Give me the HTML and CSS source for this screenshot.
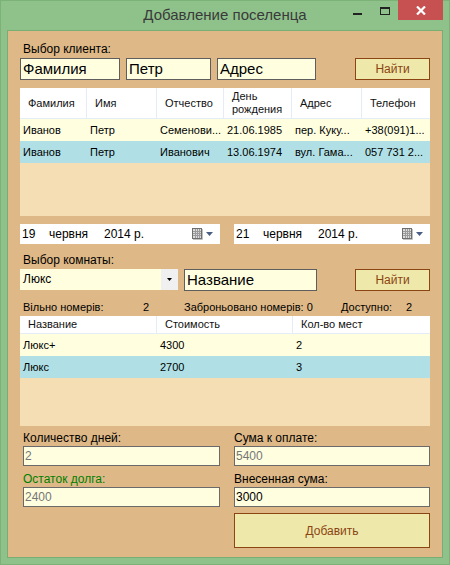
FILE: index.html
```html
<!DOCTYPE html>
<html lang="ru">
<head>
<meta charset="utf-8">
<title>Добавление поселенца</title>
<link rel="stylesheet" href="styles.css">
</head>
<body>
<div class="window">
  <div class="titlebar">
    <div class="spacer"></div>
    <div class="title">Добавление поселенца</div>
    <div class="controls">
      <div class="ctl ctl-min"><span class="min-bar"></span></div>
      <div class="ctl ctl-max"><span class="max-box"></span></div>
      <div class="ctl ctl-close">
        <svg width="10" height="9" viewBox="0 0 10 9"><path d="M1 0.5 L9 8.5 M9 0.5 L1 8.5" stroke="#fff" stroke-width="2.2" fill="none"/></svg>
      </div>
    </div>
  </div>

  <div class="client">
    <div class="lbl lbl-client">Выбор клиента:</div>
    <div class="search-row">
      <div class="tb tb-1">Фамилия</div>
      <div class="tb tb-2">Петр</div>
      <div class="tb tb-3">Адрес</div>
      <div class="btn btn-find">Найти</div>
    </div>

    <div class="dgv dgv-clients">
      <div class="dgv-head cols6">
        <div class="hc">Фамилия</div>
        <div class="hc">Имя</div>
        <div class="hc">Отчество</div>
        <div class="hc two">День<br>рождения</div>
        <div class="hc">Адрес</div>
        <div class="hc">Телефон</div>
      </div>
      <div class="dgv-row cols6 row-yellow">
        <div class="c">Иванов</div>
        <div class="c">Петр</div>
        <div class="c">Семенови...</div>
        <div class="c">21.06.1985</div>
        <div class="c">пер. Куку...</div>
        <div class="c">+38(091)1...</div>
      </div>
      <div class="dgv-row cols6 row-blue">
        <div class="c">Иванов</div>
        <div class="c">Петр</div>
        <div class="c">Иванович</div>
        <div class="c">13.06.1974</div>
        <div class="c">вул. Гама...</div>
        <div class="c">057 731 2...</div>
      </div>
    </div>

    <div class="dates">
      <div class="date date-1">
        <span class="d-day">19</span><span class="d-month">червня</span><span class="d-year">2014 р.</span>
        <span class="d-icon">
          <svg width="11" height="12" viewBox="0 0 11 12"><rect x="0.5" y="0.5" width="9" height="10" fill="#dcdcdc" stroke="#6e6e6e"/><path d="M1 3.5H9M1 5.5H9M1 7.5H9M3.5 1V10M5.5 1V10M7.5 1V10" stroke="#9a9a9a" stroke-width="1"/><path d="M1 11.5H10.5V1" stroke="#c0c0c0" stroke-width="1" fill="none"/></svg>
          <svg class="arr" width="7" height="4" viewBox="0 0 7 4"><path d="M0 0H7L3.5 4Z" fill="#4a5d85"/></svg>
        </span>
      </div>
      <div class="date date-2">
        <span class="d-day">21</span><span class="d-month">червня</span><span class="d-year">2014 р.</span>
        <span class="d-icon">
          <svg width="11" height="12" viewBox="0 0 11 12"><rect x="0.5" y="0.5" width="9" height="10" fill="#dcdcdc" stroke="#6e6e6e"/><path d="M1 3.5H9M1 5.5H9M1 7.5H9M3.5 1V10M5.5 1V10M7.5 1V10" stroke="#9a9a9a" stroke-width="1"/><path d="M1 11.5H10.5V1" stroke="#c0c0c0" stroke-width="1" fill="none"/></svg>
          <svg class="arr" width="7" height="4" viewBox="0 0 7 4"><path d="M0 0H7L3.5 4Z" fill="#4a5d85"/></svg>
        </span>
      </div>
    </div>

    <div class="lbl lbl-room">Выбор комнаты:</div>
    <div class="room-row">
      <div class="combo">
        <span class="combo-text">Люкс</span>
        <span class="combo-btn"><svg width="5" height="3" viewBox="0 0 5 3"><path d="M0 0H5L2.5 3Z" fill="#000"/></svg></span>
      </div>
      <div class="tb tb-name">Название</div>
      <div class="btn btn-find">Найти</div>
    </div>

    <div class="stats">
      <span class="s1">Вільно номерів:</span><span class="s2">2</span><span class="s3">Заброньовано номерів: 0</span><span class="s4">Доступно:</span><span class="s5">2</span>
    </div>

    <div class="dgv dgv-rooms">
      <div class="dgv-head cols3">
        <div class="hc">Название</div>
        <div class="hc">Стоимость</div>
        <div class="hc">Кол-во мест</div>
      </div>
      <div class="dgv-row cols3 row-yellow">
        <div class="c">Люкс+</div>
        <div class="c">4300</div>
        <div class="c">2</div>
      </div>
      <div class="dgv-row cols3 row-blue">
        <div class="c">Люкс</div>
        <div class="c">2700</div>
        <div class="c">3</div>
      </div>
    </div>

    <div class="bottom">
      <div class="col">
        <div class="lbl">Количество дней:</div>
        <div class="field muted">2</div>
        <div class="lbl green">Остаток долга:</div>
        <div class="field muted">2400</div>
      </div>
      <div class="col">
        <div class="lbl">Сума к оплате:</div>
        <div class="field muted">5400</div>
        <div class="lbl">Внесенная сума:</div>
        <div class="field">3000</div>
        <div class="btn btn-add">Добавить</div>
      </div>
    </div>
  </div>
</div>
</body>
</html>
```

FILE: styles.css
```css
html, body {
  margin: 0;
  padding: 0;
}

body {
  width: 450px;
  height: 565px;
  overflow: hidden;
  font-family: "Liberation Sans", Arial, sans-serif;
  color: #000;
}

.window {
  width: 450px;
  height: 565px;
  background: #8fc28b;
  box-shadow: inset 0 0 0 1px #7cb178;
  display: flex;
  flex-direction: column;
}

/* title bar */
.titlebar {
  height: 30px;
  display: grid;
  grid-template-columns: 1fr auto 1fr;
  flex: none;
}

.title {
  font-size: 15px;
  line-height: 30px;
  color: #3a3a3a;
  white-space: nowrap;
}

.controls {
  justify-self: end;
  display: flex;
  margin-right: 7px;
  height: 20px;
}

.ctl {
  width: 27px;
  height: 20px;
  display: flex;
  justify-content: center;
  align-items: flex-start;
}

.min-bar {
  display: block;
  width: 9px;
  height: 2px;
  margin-top: 13px;
  background: #222;
}

.max-box {
  display: block;
  width: 10px;
  height: 8px;
  margin-top: 7px;
  box-sizing: border-box;
  border: 1px solid #222;
  border-top-width: 2px;
}

.ctl-close {
  width: 45px;
  background: #c75050;
  align-items: center;
}

/* client area */
.client {
  flex: 1;
  margin: 0 7px 7px 7px;
  border: 1px solid #78ad74;
  background: #deb887;
  padding: 0 12px;
  display: flex;
  flex-direction: column;
}

.lbl {
  font-size: 12px;
  line-height: 14px;
  height: 14px;
  white-space: nowrap;
}

.lbl-client {
  margin-top: 11px;
  padding-left: 3px;
}

.search-row {
  margin-top: 2px;
  display: flex;
  height: 22px;
}

.tb {
  box-sizing: border-box;
  height: 22px;
  border: 1px solid #5e5e5e;
  background: #ffffe0;
  font-size: 15px;
  line-height: 20px;
  padding-left: 2px;
  white-space: nowrap;
  overflow: hidden;
}

.tb-1 { width: 100px; }
.tb-2 { width: 85px; margin-left: 6px; }
.tb-3 { width: 99px; margin-left: 6px; }
.tb-name { width: 133px; margin-left: 6px; }

.btn {
  box-sizing: border-box;
  border: 1px solid #8b4513;
  background: #eee8aa;
  color: #8b4513;
  font-size: 12px;
  display: flex;
  align-items: center;
  justify-content: center;
}

.btn-find {
  width: 75px;
  height: 22px;
  margin-left: auto;
}

/* data grids */
.dgv {
  background: #f5deb3;
  font-size: 11px;
}

.dgv-clients {
  margin-top: 8px;
  height: 128px;
}

.dgv-rooms {
  margin-top: 2px;
  height: 110px;
}

.cols6 {
  display: grid;
  grid-template-columns: 67px 70px 67px 68px 70px 68px;
}

.cols3 {
  display: grid;
  grid-template-columns: 137px 136px 137px;
}

.dgv-head {
  background: #fff;
  box-sizing: border-box;
  border-bottom: 1px solid #e4ecf7;
}

.dgv-clients .dgv-head { height: 31px; }
.dgv-rooms .dgv-head { height: 18px; }

.hc {
  display: flex;
  align-items: center;
  padding-left: 8px;
  border-right: 1px solid #e4ecf7;
  line-height: 13px;
  white-space: nowrap;
  color: #111;
}

.hc:last-child { border-right: none; }

.dgv-row {
  height: 22px;
  line-height: 22px;
}

.c {
  padding-left: 3px;
  white-space: nowrap;
  overflow: hidden;
}

.row-yellow { background: #ffffe0; }
.row-blue { background: #b0e0e6; }

/* dates */
.dates {
  margin-top: 8px;
  display: flex;
  justify-content: space-between;
  height: 20px;
}

.date {
  height: 20px;
  background: #fff;
  display: flex;
  align-items: center;
  font-size: 12px;
  padding-left: 2px;
  box-sizing: border-box;
  white-space: nowrap;
}

.date-1 { width: 200px; }
.date-2 { width: 196px; }

.d-day { width: 27px; }
.d-month { width: 55px; }

.d-icon {
  margin-left: auto;
  margin-right: 7px;
  display: flex;
  align-items: center;
  gap: 3px;
}

.arr { margin-top: -1px; }

/* room selection */
.lbl-room {
  margin-top: 9px;
  padding-left: 3px;
}

.room-row {
  margin-top: 2px;
  display: flex;
  height: 22px;
}

.combo {
  width: 158px;
  height: 21px;
  background: #ffffe0;
  display: flex;
  font-size: 12px;
}

.combo-text {
  flex: 1;
  padding-left: 3px;
  line-height: 21px;
}

.combo-btn {
  width: 17px;
  background: #f0f0f0;
  display: flex;
  align-items: center;
  justify-content: center;
}

.stats {
  margin-top: 9px;
  height: 14px;
  line-height: 14px;
  font-size: 11px;
  padding-left: 3px;
  display: flex;
  white-space: nowrap;
}

.s1 { width: 120px; }
.s2 { width: 41px; }
.s3 { width: 157px; }
.s4 { width: 65px; }

/* bottom */
.bottom {
  margin-top: 5px;
  padding-left: 3px;
  display: grid;
  grid-template-columns: 197px 196px;
  column-gap: 14px;
}

.col {
  display: flex;
  flex-direction: column;
}

.field {
  box-sizing: border-box;
  height: 20px;
  margin-top: 1px;
  border: 1px solid #6a6a6a;
  background: #ffffe0;
  font-size: 12px;
  line-height: 18px;
  padding-left: 1px;
  color: #000;
}

.field.muted { color: #767676; }

.col .lbl + .field { margin-top: 1px; }
.col .field + .lbl { margin-top: 6px; }

.green { color: #008000; }

.btn-add {
  margin-top: 6px;
  height: 35px;
  font-size: 12px;
}
```
